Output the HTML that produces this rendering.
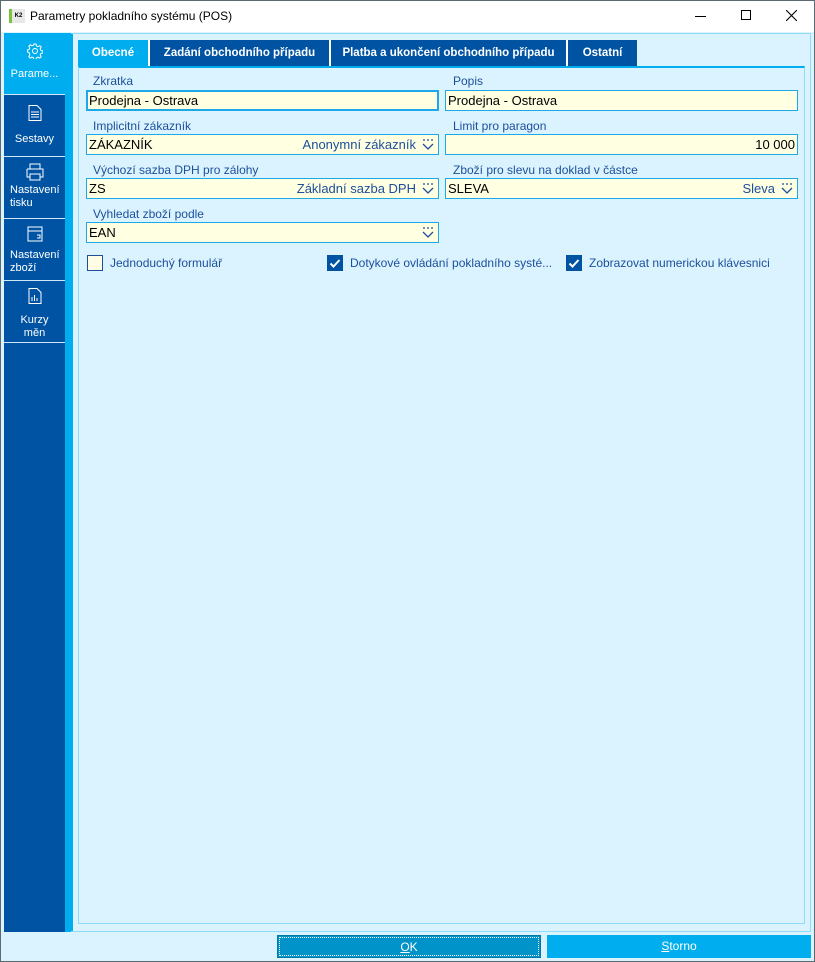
<!DOCTYPE html><html><head><meta charset="utf-8"><style>
*{box-sizing:border-box;margin:0;padding:0}
body{width:815px;height:962px;overflow:hidden;font-family:"Liberation Sans",sans-serif;font-size:12px;background:#fff;position:relative}
.win{position:absolute;left:0;top:0;width:815px;height:962px;border:1px solid #5a6a72}
.abs{position:absolute}
.title{left:0;top:0;width:813px;height:31px;background:#fff}
.body{left:0;top:31px;width:813px;height:929px;background:#daf3fe}
.side{left:3px;top:1px;width:61px;height:899px;background:#0053a3}
.strip{left:64px;top:1px;width:8px;height:899px;background:#00aeef}
.outer{left:70px;top:1px;width:740px;height:899px;border:1px solid #8fdcf8;border-left:none}
.si{position:absolute;left:0;width:61px;color:#fff;text-align:center;font-size:11px;border-bottom:1px solid #cfe8f6}
.tab{position:absolute;top:8px;height:26px;background:#0053a3;color:#fff;font-weight:bold;font-size:11.5px;text-align:center;line-height:26px;border-right:2px solid #fff}
.panel{left:77px;top:34px;width:727px;height:858px;border:1px solid #8fdcf8;border-top:2px solid #00aeef}
.lbl{position:absolute;color:#1c4f9c;font-size:12px}
.inp{position:absolute;height:21px;background:#ffffe2;border:1px solid #1ea8e8;font-size:13px;line-height:19px;padding:0 2px;color:#000}
.inp .r{position:absolute;right:22px;top:0;color:#1c4f9c}
.inp .dd{position:absolute;right:4px;top:4px}
.cb{position:absolute;width:16px;height:16px}
.cbt{position:absolute;color:#1c4f9c;font-size:12px}
.btn{position:absolute;top:903px;height:23px;color:#fff;text-align:center;line-height:23px;font-size:12px}
</style></head><body><div class="win">
<div class="abs title">
<div class="abs" style="left:8px;top:8px;width:16px;height:14px;background:#e8e8e8;border-left:3px solid #7bc142;font-size:6px;font-weight:bold;line-height:14px;text-align:center">K2</div>
<div class="abs" style="left:29px;top:8px;font-size:12px;color:#000">Parametry pokladního systému (POS)</div>
<div class="abs" style="left:694px;top:15px;width:11px;height:1px;background:#000"></div>
<div class="abs" style="left:740px;top:9px;width:10px;height:10px;border:1px solid #000"></div>
<svg class="abs" style="left:785px;top:9px" width="11" height="11"><path d="M0 0L11 11M11 0L0 11" stroke="#000" stroke-width="1.1"/></svg>
</div>
<div class="abs body">
<div class="abs side">
<div class="si" style="top:0;height:62px;background:#00aeef">
<svg style="margin-top:10px" width="16" height="16" viewBox="0 0 16 16"><circle cx="8" cy="8" r="2.5" fill="none" stroke="#fff"/><path d="M7 1h2l.5 2 1.5.7 1.8-1 1.4 1.4-1 1.8.7 1.5 2 .5v2l-2 .5-.7 1.5 1 1.8-1.4 1.4-1.8-1-1.5.7-.5 2H7l-.5-2-1.5-.7-1.8 1-1.4-1.4 1-1.8L2.1 9.5 0.5 9V7l1.6-.5.7-1.5-1-1.8 1.4-1.4 1.8 1 1.5-.7z" fill="none" stroke="#fff"/></svg>
<div style="margin-top:6px">Parame...</div></div>
<div class="si" style="top:62px;height:62px"><svg style="margin-top:10px" width="14" height="16"><path d="M1 .5h8l4 4v11H1z M3 7h8M3 9.5h8M3 12h8" fill="none" stroke="#fff"/></svg><div style="margin-top:9px">Sestavy</div></div>
<div class="si" style="top:124px;height:62px"><svg style="margin-top:6px" width="20" height="18"><path d="M5 6V1h10v5M2 6h16v8h-3M5 14H2V6M5 11h10v6H5z" fill="none" stroke="#fff"/></svg><div style="line-height:13px;text-align:left;padding-left:6px">Nastavení<br>tisku</div></div>
<div class="si" style="top:186px;height:62px"><svg style="margin-top:7px" width="16" height="16"><path d="M1 1h14v14H1zM1 5h14M10 9h3v3h-3" fill="none" stroke="#fff"/></svg><div style="line-height:13px;text-align:left;padding-left:6px;margin-top:4px">Nastavení<br>zboží</div></div>
<div class="si" style="top:248px;height:62px"><svg style="margin-top:7px" width="14" height="16"><path d="M1 .5h8l4 4v11H1z M4 13V9M6.5 13V7M9 13v-3" fill="none" stroke="#fff"/></svg><div style="line-height:13px;margin-top:7px">Kurzy<br>měn</div></div>
</div>
<div class="abs strip"></div>
<div class="abs outer"></div>
<div class="tab" style="left:77px;width:72px;background:#00aeef">Obecné</div>
<div class="tab" style="left:149px;width:181px">Zadání obchodního případu</div>
<div class="tab" style="left:330px;width:237px">Platba a ukončení obchodního případu</div>
<div class="tab" style="left:567px;width:69px;border-right:none">Ostatní</div>
<div class="abs panel"></div>
<div class="lbl" style="left:92px;top:42px">Zkratka</div>
<div class="inp" style="left:85px;top:58px;width:353px;border:2px solid #1ea8e8;line-height:17px;padding-left:1px">Prodejna - Ostrava</div>
<div class="lbl" style="left:452px;top:42px">Popis</div>
<div class="inp" style="left:444px;top:58px;width:353px">Prodejna - Ostrava</div>
<div class="lbl" style="left:92px;top:87px">Implicitní zákazník</div>
<div class="inp" style="left:85px;top:102px;width:353px">ZÁKAZNÍK<span class="r">Anonymní zákazník</span><svg class="dd" width="12" height="11"><path d="M1 1h2M5 1h2M9 1h2M1 5l5 5 5-5" fill="none" stroke="#1c4f9c" stroke-width="1.3"/></svg></div>
<div class="lbl" style="left:452px;top:87px">Limit pro paragon</div>
<div class="inp" style="left:444px;top:102px;width:353px;text-align:right">10 000</div>
<div class="lbl" style="left:92px;top:131px">Výchozí sazba DPH pro zálohy</div>
<div class="inp" style="left:85px;top:146px;width:353px">ZS<span class="r">Základní sazba DPH</span><svg class="dd" width="12" height="11"><path d="M1 1h2M5 1h2M9 1h2M1 5l5 5 5-5" fill="none" stroke="#1c4f9c" stroke-width="1.3"/></svg></div>
<div class="lbl" style="left:452px;top:131px">Zboží pro slevu na doklad v částce</div>
<div class="inp" style="left:444px;top:146px;width:353px">SLEVA<span class="r">Sleva</span><svg class="dd" width="12" height="11"><path d="M1 1h2M5 1h2M9 1h2M1 5l5 5 5-5" fill="none" stroke="#1c4f9c" stroke-width="1.3"/></svg></div>
<div class="lbl" style="left:92px;top:175px">Vyhledat zboží podle</div>
<div class="inp" style="left:85px;top:190px;width:353px">EAN<svg class="dd" width="12" height="11"><path d="M1 1h2M5 1h2M9 1h2M1 5l5 5 5-5" fill="none" stroke="#1c4f9c" stroke-width="1.3"/></svg></div>
<div class="cb" style="left:86px;top:223px;background:#fffde6;border:1px solid #1c4f9c"></div>
<div class="cbt" style="left:109px;top:224px">Jednoduchý formulář</div>
<div class="cb" style="left:326px;top:223px;background:#0053a3"><svg width="16" height="16"><path d="M3.5 8.5l3 3 6-6.5" fill="none" stroke="#fff" stroke-width="2"/></svg></div>
<div class="cbt" style="left:349px;top:224px">Dotykové ovládání pokladního systé...</div>
<div class="cb" style="left:565px;top:223px;background:#0053a3"><svg width="16" height="16"><path d="M3.5 8.5l3 3 6-6.5" fill="none" stroke="#fff" stroke-width="2"/></svg></div>
<div class="cbt" style="left:588px;top:224px">Zobrazovat numerickou klávesnici</div>
<div class="btn" style="left:276px;width:264px;background:#0093c9;border:1px solid #0078a8"><div style="position:absolute;inset:1px;border:1px dotted #fff"></div><u>O</u>K</div>
<div class="btn" style="left:546px;width:264px;background:#00aeef"><u>S</u>torno</div>
</div>
</div></body></html>
